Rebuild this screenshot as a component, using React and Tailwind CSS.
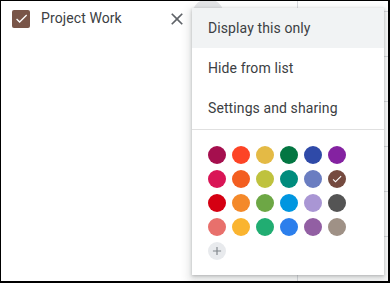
import React from "react";

const palette = [
  ["#A50F4E", "#FD4426", "#E4BA45", "#037642", "#2F4AA8", "#8422A1"],
  ["#D91556", "#F35E20", "#BFC23E", "#008C7D", "#6A7DC1", "#754A3F"],
  ["#D50012", "#F4892A", "#6DA745", "#0096E0", "#A996D4", "#545454"],
  ["#E8706C", "#FAB430", "#21AD72", "#2C7FEC", "#925FA3", "#9F9186"],
];

const items = ["Display this only", "Hide from list", "Settings and sharing"];

function Check({ size = 14 }) {
  return (
    <svg width={size} height={size} viewBox="0 0 24 24" fill="#fff">
      <path d="M9 16.17L4.83 12l-1.42 1.41L9 19 21 7l-1.41-1.41z" />
    </svg>
  );
}

export default function App() {
  return (
    <div
      className="relative h-[283px] w-[390px] overflow-hidden border-t border-l border-r-2 border-b-2 border-black bg-white text-[#3c4043]"
      style={{ fontFamily: "Roboto, 'Liberation Sans', sans-serif" }}
    >
      <div className="flex h-full">
        {/* calendar list */}
        <div className="w-[296px]">
          <div className="flex h-[34px] items-center pl-[11px] pt-px">
            <span className="grid h-[18px] w-[18px] place-items-center rounded-[2px] bg-[#795548]">
              <Check size={15} />
            </span>
            <span className="ml-[11px] text-[14px] tracking-[0.1px]">Project Work</span>
            <svg className="ml-auto mr-[110px]" width="20" height="20" viewBox="0 0 24 24" fill="#5f6368">
              <path d="M19 6.41L17.59 5 12 10.59 6.41 5 5 6.41 10.59 12 5 17.59 6.41 19 12 13.41 17.59 19 19 17.59 13.41 12z" />
            </svg>
          </div>
        </div>
        <div className="w-px bg-[#dadce0]" />
        {/* grid behind menu */}
        <div className="flex flex-1 flex-col">
          <div className="h-[11px]" />
          {[0, 1, 2, 3, 4, 5].map((i) => (
            <div key={i} className="h-[48px] border-t border-[#dadce0]" />
          ))}
        </div>
      </div>

      {/* hover circle of the overflow button */}
      <div className="absolute left-[191px] top-[-2px] h-8 w-8 rounded-full bg-[#e4e5e7]" />

      {/* menu */}
      <div className="absolute left-[191px] top-[7px] h-[267px] w-[192px] bg-white shadow-[0_4px_8px_3px_rgba(60,64,67,0.15),0_1px_3px_rgba(60,64,67,0.3)]">
        {items.map((label, i) => (
          <div
            key={label}
            className={`flex h-10 items-center px-4 text-[14px] tracking-[0.1px] ${i === 0 ? "bg-[#f1f3f4]" : ""}`}
          >
            {label}
          </div>
        ))}
        <div className="mt-px border-t border-[#e0e0e0]" />
        <div className="flex flex-col gap-[6px] px-4 pt-4">
          {palette.map((row, r) => (
            <div key={r} className="flex gap-[6px]">
              {row.map((c) => (
                <span
                  key={c}
                  className="grid h-[18px] w-[18px] place-items-center rounded-full"
                  style={{ backgroundColor: c }}
                >
                  {c === "#754A3F" && <Check size={12} />}
                </span>
              ))}
            </div>
          ))}
          <span className="grid h-[18px] w-[18px] place-items-center rounded-full bg-[#e8eaed]">
            <svg width="14" height="14" viewBox="0 0 24 24" fill="#80868b">
              <path d="M19 13h-6v6h-2v-6H5v-2h6V5h2v6h6v2z" />
            </svg>
          </span>
        </div>
      </div>
    </div>
  );
}
